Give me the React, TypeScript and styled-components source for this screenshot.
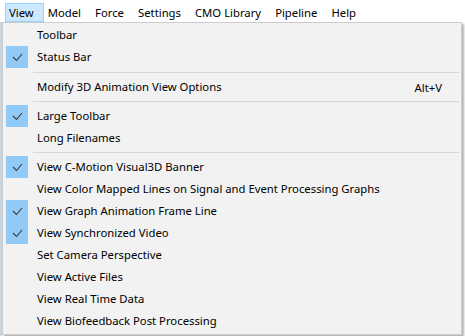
import styled, { createGlobalStyle } from "styled-components"

const GlobalStyle = createGlobalStyle`
    html, body {
        margin: 0;
        padding: 0;
        background: #ffffff;
    }
    body {
        font-family: "Noto Sans", "Liberation Sans", sans-serif;
        font-size: 11.3px;
        color: #000000;
    }
`

const topMenus = ['View', 'Model', 'Force', 'Settings', 'CMO Library', 'Pipeline', 'Help']

type Entry =
    | { kind: 'item', label: string, checked?: boolean, shortcut?: string }
    | { kind: 'sep', tall?: boolean }

const entries: Entry[] = [
    { kind: 'item', label: 'Toolbar' },
    { kind: 'item', label: 'Status Bar', checked: true },
    { kind: 'sep', tall: true },
    { kind: 'item', label: 'Modify 3D Animation View Options', shortcut: 'Alt+V' },
    { kind: 'sep' },
    { kind: 'item', label: 'Large Toolbar', checked: true },
    { kind: 'item', label: 'Long Filenames' },
    { kind: 'sep' },
    { kind: 'item', label: 'View C-Motion Visual3D Banner', checked: true },
    { kind: 'item', label: 'View Color Mapped Lines on Signal and Event Processing Graphs' },
    { kind: 'item', label: 'View Graph Animation Frame Line', checked: true },
    { kind: 'item', label: 'View Synchronized Video', checked: true },
    { kind: 'item', label: 'Set Camera Perspective' },
    { kind: 'item', label: 'View Active Files' },
    { kind: 'item', label: 'View Real Time Data' },
    { kind: 'item', label: 'View Biofeedback Post Processing' },
]

const Page = styled.div`
    width: 465px;
    height: 336px;
    overflow: hidden;
    display: flex;
    flex-direction: column;
    background: #ffffff;
`

const MenuBar = styled.div`
    display: flex;
    flex-direction: row;
    height: 22px;
    padding: 3px 0 0 5px;
    box-sizing: border-box;
    background: #ffffff;
`

const TopItem = styled.div<{ $open: boolean }>`
    height: 19px;
    line-height: 17px;
    padding: 0 9px 0 3px;
    box-sizing: border-box;
    border: 1px solid ${({ $open }) => ($open ? '#99d1ff' : 'transparent')};
    background: ${({ $open }) => ($open ? '#cce8ff' : 'transparent')};
    white-space: nowrap;
`

const Body = styled.div`
    display: flex;
    flex-direction: row;
    flex: 1;
`

const LeftEdge = styled.div`
    width: 2px;
    background: #c8d4e0;
`

const Dropdown = styled.div`
    width: 460px;
    height: 313px;
    box-sizing: border-box;
    background: #f2f2f2;
    border: 1px solid #cccccc;
    box-shadow: 2px 2px 2px rgba(0, 0, 0, 0.3);
    padding: 1px 2px;
    display: flex;
    flex-direction: column;
`

const Row = styled.div`
    display: flex;
    flex-direction: row;
    align-items: center;
    height: 22px;
    flex-shrink: 0;
`

const CheckCell = styled.div<{ $checked: boolean }>`
    width: 22px;
    height: 22px;
    margin-left: 1px;
    display: flex;
    align-items: center;
    justify-content: center;
    background: ${({ $checked }) => ($checked ? '#91c9f7' : 'transparent')};
`

const Label = styled.div`
    flex: 1;
    padding-left: 9px;
    white-space: nowrap;
    line-height: 22px;
`

const Shortcut = styled.div`
    padding-right: 17px;
    white-space: nowrap;
`

const Separator = styled.div<{ $tall: boolean }>`
    height: ${({ $tall }) => ($tall ? 8 : 7)}px;
    display: flex;
    align-items: center;
    padding-left: 28px;
    flex-shrink: 0;
    &::after {
        content: '';
        flex: 1;
        height: 1px;
        background: #d7d7d7;
    }
`

const CheckMark = () => (
    <svg width="22" height="22" viewBox="0 0 22 22">
        <path d="M7 11 L10.5 14.5 L16 8" fill="none" stroke="#3a3a3a" strokeWidth="1.1" />
    </svg>
)

const App = () => {
    return (
        <Page>
            <GlobalStyle />
            <MenuBar>
                {topMenus.map(name => (
                    <TopItem key={name} $open={name === 'View'}>{name}</TopItem>
                ))}
            </MenuBar>
            <Body>
                <LeftEdge />
                <Dropdown>
                    {entries.map((entry, i) => {
                        if (entry.kind === 'sep') return <Separator key={i} $tall={!!entry.tall} />
                        return (
                            <Row key={i}>
                                <CheckCell $checked={!!entry.checked}>
                                    {entry.checked && <CheckMark />}
                                </CheckCell>
                                <Label>{entry.label}</Label>
                                {entry.shortcut && <Shortcut>{entry.shortcut}</Shortcut>}
                            </Row>
                        )
                    })}
                </Dropdown>
            </Body>
        </Page>
    )
}

export default App
